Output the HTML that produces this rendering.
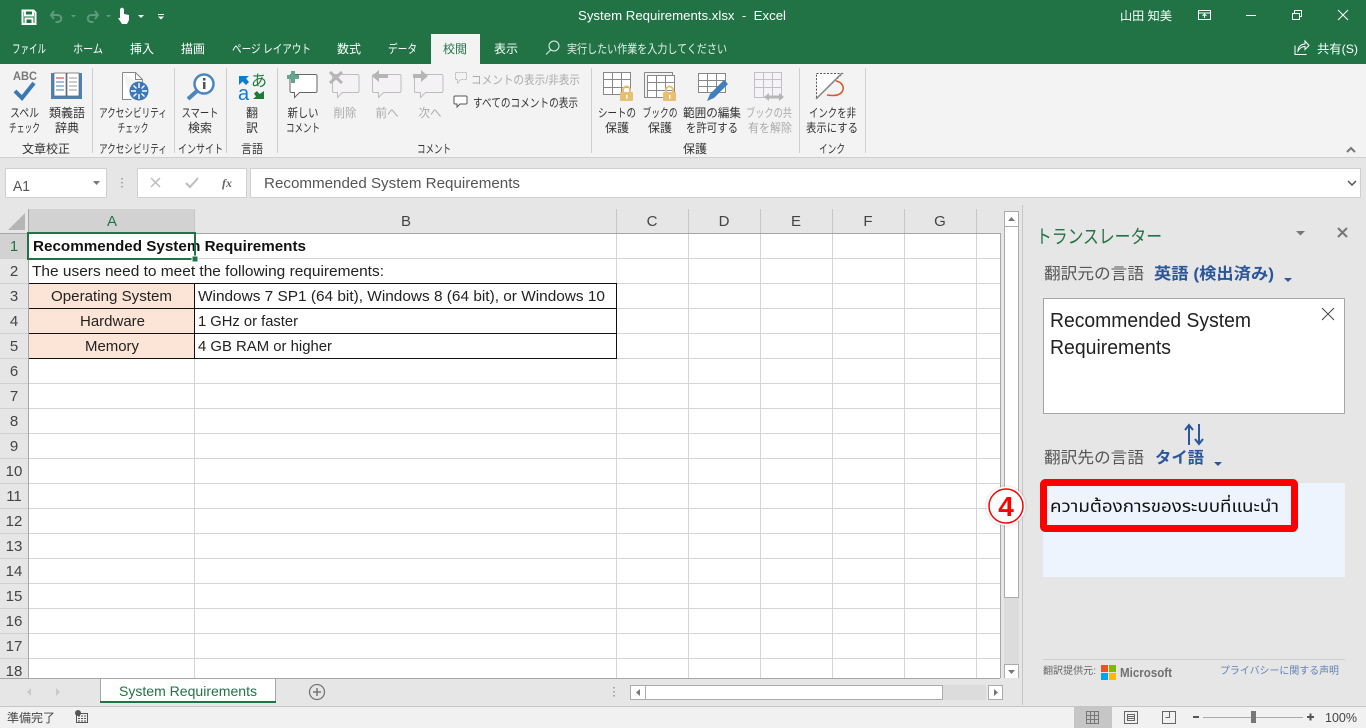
<!DOCTYPE html>
<html lang="ja"><head><meta charset="utf-8"><title>System Requirements.xlsx - Excel</title>
<style>
html,body{margin:0;padding:0;width:1366px;height:728px;overflow:hidden;background:#e6e6e6}
svg{display:block}
text{font-family:"Liberation Sans","Noto Sans CJK JP",sans-serif;white-space:pre}
.j{font-size:12px;fill:#333}
.m{text-anchor:middle}
.d{fill:#ababab}
.w{fill:#fff;font-size:12px}
.c{font-size:15px;fill:#222}
.h{font-size:15px;fill:#444;text-anchor:middle}
.g{stroke:#d4d4d4;stroke-width:1;fill:none}
.t{fill:none;stroke:#fff}
</style></head><body>
<svg width="1366" height="728" viewBox="0 0 1366 728" xmlns="http://www.w3.org/2000/svg" shape-rendering="geometricPrecision">
<!-- backgrounds -->
<rect width="1366" height="728" fill="#e6e6e6"/>
<rect width="1366" height="64" fill="#217346"/>
<rect x="431" y="34" width="49" height="30" fill="#f3f3f3"/>
<rect y="64" width="1366" height="93" fill="#f3f3f3"/>
<rect y="157" width="1366" height="1" fill="#cfcfcf"/>

<!-- QAT -->
<path d="M22.500 10.500h11l2 2v11.500h-13z M25 10.500v5h8v-5 M25.500 24v-5.500h7V24" fill="none" stroke="#fff" stroke-width="2"/>
<path d="M54 11l-3 4 3 4M51.500 15h6c5 0 5 7 0 7h-2" fill="none" stroke="#5f9a7c" stroke-width="2"/>
<path d="M71 15h5l-2.500 2.500z" fill="#5f9a7c"/>
<path d="M95 11l3 4-3 4M97.500 15h-6c-5 0-5 7 0 7h2" fill="none" stroke="#5f9a7c" stroke-width="2"/>
<path d="M106 15h5l-2.500 2.500z" fill="#5f9a7c"/>
<path d="M120 10c0-3 4-3 4 0v4l5 1v5l-2 4h-5l-4-6 2 0z" fill="#fff"/>
<path d="M138 15h6l-3 3z" fill="#fff"/>
<path d="M158 14h6v1h-6zM158 16.500h6l-3 3z" fill="#fff"/>

<!-- Title -->
<text x="578" y="20" style="fill:#fff;font-size:13px" textLength="208" lengthAdjust="spacingAndGlyphs">System Requirements.xlsx  -  Excel</text>
<text x="1120" y="20" class="w" textLength="52" lengthAdjust="spacingAndGlyphs">山田 知美</text>
<rect x="1198.500" y="10.500" width="12" height="9" class="t"/><path d="M1198.500 13h12M1204.500 18v-4M1202.500 16l2-2 2 2" class="t"/>
<path d="M1246 15.500h10" class="t"/>
<path d="M1292.500 13.500h7v6h-7zM1294.500 13v-2.500h7v6h-2" class="t"/>
<path d="M1338 10l10 10M1348 10l-10 10" class="t"/>

<!-- Tabs -->
<text x="12" y="53" class="w" textLength="34" lengthAdjust="spacingAndGlyphs">ファイル</text>
<text x="73" y="53" class="w" textLength="30" lengthAdjust="spacingAndGlyphs">ホーム</text>
<text x="130" y="53" class="w" textLength="24" lengthAdjust="spacingAndGlyphs">挿入</text>
<text x="181" y="53" class="w" textLength="24" lengthAdjust="spacingAndGlyphs">描画</text>
<text x="232" y="53" class="w" textLength="79" lengthAdjust="spacingAndGlyphs">ページ レイアウト</text>
<text x="337" y="53" class="w" textLength="24" lengthAdjust="spacingAndGlyphs">数式</text>
<text x="388" y="53" class="w" textLength="29" lengthAdjust="spacingAndGlyphs">データ</text>
<text x="443" y="53" style="font-size:12px;fill:#217346" textLength="24" lengthAdjust="spacingAndGlyphs">校閲</text>
<text x="494" y="53" class="w" textLength="24" lengthAdjust="spacingAndGlyphs">表示</text>
<circle cx="554" cy="46" r="5" fill="none" stroke="#fff" stroke-opacity=".9"/><path d="M550.500 50l-4.500 4.500" stroke="#fff" stroke-opacity=".9"/>
<text x="567" y="53" style="font-size:12px;fill:#e4f0e9" textLength="160" lengthAdjust="spacingAndGlyphs">実行したい作業を入力してください</text>
<path d="M1295 45.500v9h11.500M1298 51c0-5 4-7 7-7v-3l4 4.500-4 4v-3c-3 0-5 1-7 4.500z" class="t"/>
<text x="1317" y="53" class="w" textLength="41" lengthAdjust="spacingAndGlyphs">共有(S)</text>

<!-- Ribbon separators -->
<path d="M92.500 68v85M174.500 68v85M226.500 68v85M277.500 68v85M591.500 68v85M799.500 68v85M865.500 68v85" stroke="#cfcfcf" fill="none"/>
<path d="M1347 152l4-4 4 4" fill="none" stroke="#777" stroke-width="2"/>

<!-- Spell icon -->
<text x="13" y="80" style="font-size:12px;font-weight:bold;fill:#777" textLength="24" lengthAdjust="spacingAndGlyphs">ABC</text>
<path d="M15 91l7 7 12-15" fill="none" stroke="#3a78b4" stroke-width="4"/>
<!-- Thesaurus -->
<rect x="51" y="73" width="31" height="26" fill="#4d82b8"/>
<path d="M54 73h12v23H54zM67 73h12v23H67z" fill="#fff" stroke="#666" stroke-width=".7"/>
<path d="M56 78h8" stroke="#c0392b"/><path d="M56 82h8M56 86h8M56 90h8" stroke="#4d82b8"/><path d="M69 78h8M69 82h8M69 86h8M69 90h8" stroke="#999"/>
<!-- Accessibility -->
<path d="M122.500 72.500h13l7 7v6M142.500 79.500h-7v-7M122.500 72.500v27h9" fill="#fff" stroke="#888"/>
<circle cx="139" cy="91" r="9.500" fill="#3b78b5"/>
<path d="M139 83v5M139 94v5M131 91h5M142 91h5M133.500 85.500l3 3M141.500 93.500l3 3M144.500 85.500l-3 3M136.500 93.500l-3 3" stroke="#fff" stroke-width="1.400"/>
<!-- Smart lookup -->
<circle cx="204" cy="84" r="9.500" fill="#fff" stroke="#4d86bd" stroke-width="2.500"/>
<path d="M197 91l-9 8" stroke="#4d86bd" stroke-width="4"/>
<rect x="203" y="82" width="2.500" height="7" fill="#555"/><rect x="203" y="78" width="2.500" height="2.500" fill="#555"/>
<!-- Translate -->
<path d="M239 76h10l-3 2.500 3 3.500-3 3-3.500-3.500-3.500 3.500z" fill="#0f7ad1"/>
<text x="251" y="86" style="font-size:16px;fill:#1f7a3a">あ</text>
<text x="238" y="100" style="font-size:20px;fill:#0f7ad1">a</text>
<path d="M264 91v8h-11l3-2.500-2-3 3-2.500 2.500 3z" fill="#1f7a3a"/>
<!-- New comment -->
<path d="M290.500 74.500h25q1.500 0 1.500 1.500v15q0 1.500-1.500 1.500h-16l-5 5v-5h-3q-1.500 0-1.500-1.500V76q0-1.500 1.500-1.500z" fill="#fff" stroke="#666"/>
<path d="M287 75h4v-4h4v4h4v4h-4v4h-4v-4h-4z" fill="#63a58f"/>
<!-- Delete -->
<path d="M333.500 74.500h24q1.500 0 1.500 1.500v15q0 1.500-1.500 1.500h-15l-5 5v-5h-3.500q-1.500 0-1.500-1.500V76q0-1.500 1.500-1.500z" fill="#f5f2f6" stroke="#bdbdbd"/>
<path d="M330 72l12 11M342 72l-12 11" stroke="#b5b5b5" stroke-width="3"/>
<!-- Prev -->
<path d="M374.500 74.500h25q1.500 0 1.500 1.500v15q0 1.500-1.500 1.500h-16l-5 5v-5h-4.500q-1.500 0-1.500-1.500V76q0-1.500 1.500-1.500z" fill="#f5f2f6" stroke="#bdbdbd"/>
<path d="M372 76l7-6v4h9v4h-9v4z" fill="#b5b5b5"/>
<!-- Next -->
<path d="M416.500 74.500h25q1.500 0 1.500 1.500v15q0 1.500-1.500 1.500h-16l-5 5v-5h-4.500q-1.500 0-1.500-1.500V76q0-1.500 1.500-1.500z" fill="#f5f2f6" stroke="#bdbdbd"/>
<path d="M428 76l-7-6v4h-8v4h8v4z" fill="#b5b5b5"/>
<!-- show comment small -->
<path d="M455.500 72.500h11v7h-6l-3 4v-4h-2z" fill="none" stroke="#b5b5b5" stroke-dasharray="2 1"/>
<path d="M455 96h11q1 0 1 1v6q0 1-1 1h-6l-3 3v-3h-2q-1 0-1-1v-6q0-1 1-1z" fill="#fff" stroke="#555"/>
<!-- Protect icons -->
<g fill="none" stroke="#888"><path d="M603.500 72.500h27v22h-27zM603.500 79.500h27M603.500 87.500h27M612.500 72.500v22M621.500 72.500v22" fill="#fff"/></g>
<rect x="620" y="92" width="13" height="9" rx="1" fill="#e9bf73"/><path d="M623 92v-2a3.500 3.500 0 017 0v2" fill="none" stroke="#e9bf73" stroke-width="2"/><rect x="626" y="95" width="1.500" height="3.500" fill="#fff"/>
<g fill="none" stroke="#888"><path d="M644.500 72.500h28v3M644.500 72.500v25h3"/><path d="M647.500 75.500h27v22h-27zM647.500 82.500h27M647.500 90.500h27M656.500 75.500v22M665.500 75.500v22" fill="#fff"/></g>
<rect x="663" y="92" width="13" height="9" rx="1" fill="#e9bf73"/><path d="M666 92v-2a3.500 3.500 0 017 0v2" fill="none" stroke="#e9bf73" stroke-width="2"/><rect x="669" y="95" width="1.500" height="3.500" fill="#fff"/>
<path d="M698.500 73.500h27v19h-27zM698.500 80.500h27M698.500 86.500h27M707.500 73.500v19M716.500 73.500v19" fill="#fff" stroke="#888"/>
<path d="M707 101l3-7 14-14 4 4-14 14z" fill="#3f7fc0"/>
<g fill="none" stroke="#c3bfc6"><path d="M754.500 72.500h27v25h-27zM754.500 79.500h27M754.500 87.500h27M763.500 72.500v25M772.500 72.500v25" fill="#f6f3f8"/></g>
<path d="M764 97l5-4v2.500h10V93l5 4-5 4v-2.500h-10v2.500z" fill="#b5b5b5"/>
<!-- Ink -->
<path d="M816.500 73.500h26l-26 25z" fill="#fff" stroke="#555" stroke-dasharray="2 1.500"/>
<path d="M842 73l-26 26" stroke="#888" stroke-width="1.500"/>
<path d="M836 81c6 1 9 6 6 11-3 4-9 4-15 3" fill="none" stroke="#d9532c" stroke-width="1.500"/>

<!-- Ribbon labels -->
<text x="24.500" y="117" class="j m" textLength="29" lengthAdjust="spacingAndGlyphs">スペル</text><text x="24.500" y="132" class="j m" textLength="31" lengthAdjust="spacingAndGlyphs">チェック</text>
<text x="67" y="117" class="j m" textLength="36" lengthAdjust="spacingAndGlyphs">類義語</text><text x="67" y="132" class="j m" textLength="24" lengthAdjust="spacingAndGlyphs">辞典</text>
<text x="133" y="117" class="j m" textLength="68" lengthAdjust="spacingAndGlyphs">アクセシビリティ</text><text x="133" y="132" class="j m" textLength="31" lengthAdjust="spacingAndGlyphs">チェック</text>
<text x="200" y="117" class="j m" textLength="37" lengthAdjust="spacingAndGlyphs">スマート</text><text x="200" y="132" class="j m" textLength="24" lengthAdjust="spacingAndGlyphs">検索</text>
<text x="252" y="117" class="j m">翻</text><text x="252" y="132" class="j m">訳</text>
<text x="303" y="117" class="j m" textLength="31" lengthAdjust="spacingAndGlyphs">新しい</text><text x="303" y="132" class="j m" textLength="34" lengthAdjust="spacingAndGlyphs">コメント</text>
<text x="345" y="117" class="j m d" textLength="23" lengthAdjust="spacingAndGlyphs">削除</text><text x="387" y="117" class="j m d" textLength="23" lengthAdjust="spacingAndGlyphs">前へ</text><text x="430" y="117" class="j m d" textLength="23" lengthAdjust="spacingAndGlyphs">次へ</text>
<text x="471" y="84" class="j d" textLength="109" lengthAdjust="spacingAndGlyphs">コメントの表示/非表示</text>
<text x="473" y="107" class="j" textLength="105" lengthAdjust="spacingAndGlyphs">すべてのコメントの表示</text>
<text x="617" y="117" class="j m" textLength="38" lengthAdjust="spacingAndGlyphs">シートの</text><text x="617" y="132" class="j m" textLength="24" lengthAdjust="spacingAndGlyphs">保護</text>
<text x="660" y="117" class="j m" textLength="35" lengthAdjust="spacingAndGlyphs">ブックの</text><text x="660" y="132" class="j m" textLength="24" lengthAdjust="spacingAndGlyphs">保護</text>
<text x="712" y="117" class="j m" textLength="58" lengthAdjust="spacingAndGlyphs">範囲の編集</text><text x="712" y="132" class="j m" textLength="52" lengthAdjust="spacingAndGlyphs">を許可する</text>
<text x="769" y="117" class="j m d" textLength="46" lengthAdjust="spacingAndGlyphs">ブックの共</text><text x="770" y="132" class="j m d" textLength="44" lengthAdjust="spacingAndGlyphs">有を解除</text>
<text x="832.500" y="117" class="j m" textLength="47" lengthAdjust="spacingAndGlyphs">インクを非</text><text x="832" y="132" class="j m" textLength="52" lengthAdjust="spacingAndGlyphs">表示にする</text>
<text x="46" y="153" class="j m" textLength="48" lengthAdjust="spacingAndGlyphs">文章校正</text>
<text x="133" y="153" class="j m" textLength="68" lengthAdjust="spacingAndGlyphs">アクセシビリティ</text>
<text x="200.500" y="153" class="j m" textLength="45" lengthAdjust="spacingAndGlyphs">インサイト</text>
<text x="252" y="153" class="j m" textLength="22" lengthAdjust="spacingAndGlyphs">言語</text>
<text x="434" y="153" class="j m" textLength="34" lengthAdjust="spacingAndGlyphs">コメント</text>
<text x="695" y="153" class="j m" textLength="24" lengthAdjust="spacingAndGlyphs">保護</text>
<text x="832" y="153" class="j m" textLength="26" lengthAdjust="spacingAndGlyphs">インク</text>

<!-- Formula bar -->
<rect x="5.500" y="168.500" width="101" height="29" fill="#fff" stroke="#d0d0d0"/>
<text x="13" y="191" style="font-size:15px;fill:#555" textLength="17" lengthAdjust="spacingAndGlyphs">A1</text>
<path d="M93 181h7l-3.500 4z" fill="#777"/>
<path d="M122 178v1.500M122 182v1.500M122 186v1.500" stroke="#aaa" stroke-width="2"/>
<rect x="137.500" y="168.500" width="109" height="29" fill="#fff" stroke="#d0d0d0"/>
<path d="M151 178l9 9M160 178l-9 9" stroke="#bdbdbd" stroke-width="1.500"/>
<path d="M186 183l4 4 8-9" stroke="#bdbdbd" stroke-width="2" fill="none"/>
<text x="222" y="187" style="font-size:12px;font-style:italic;font-weight:bold;font-family:'Liberation Serif',serif;fill:#666">fx</text>
<rect x="250.500" y="168.500" width="1110" height="29" fill="#fff" stroke="#d0d0d0"/>
<text x="264" y="188" style="font-size:15px;fill:#555" textLength="256" lengthAdjust="spacingAndGlyphs">Recommended System Requirements</text>
<path d="M1348 181l4 4 4-4" fill="none" stroke="#555" stroke-width="1.500"/>

<!-- Sheet -->
<rect x="29" y="234" width="971" height="444" fill="#fff"/>
<rect x="29" y="209" width="166" height="24" fill="#d2d2d2"/>
<rect x="0" y="233" width="28" height="26" fill="#d2d2d2"/>
<path d="M8 230h17v-17z" fill="#b5b5b5"/>
<path d="M28.500 209v469M0 233.500h1000M1000.500 233v445" stroke="#a6a6a6" fill="none"/>
<path d="M194.500 209v24M616.500 209v24M688.500 209v24M760.500 209v24M832.500 209v24M904.500 209v24M976.500 209v24" stroke="#c6c6c6" fill="none"/>
<path class="g" d="M29 258.500h971M29 283.500h971M29 308.500h971M29 333.500h971M29 358.500h971M29 383.500h971M29 408.500h971M29 433.500h971M29 458.500h971M29 483.500h971M29 508.500h971M29 533.500h971M29 558.500h971M29 583.500h971M29 608.500h971M29 633.500h971M29 658.500h971"/>
<path class="g" d="M194.500 358v320M616.500 234v444M688.500 234v444M760.500 234v444M832.500 234v444M904.500 234v444M976.500 234v444"/>
<path d="M0 258.500h28M0 283.500h28M0 308.500h28M0 333.500h28M0 358.500h28M0 383.500h28M0 408.500h28M0 433.500h28M0 458.500h28M0 483.500h28M0 508.500h28M0 533.500h28M0 558.500h28M0 583.500h28M0 608.500h28M0 633.500h28M0 658.500h28" stroke="#d0d0d0" fill="none"/>
<rect x="29" y="284" width="165" height="74" fill="#fce4d6"/>
<path d="M29 283.500h588M29 308.500h588M29 333.500h588M29 358.500h588M194.500 283v76M616.500 283v76" stroke="#111" fill="none"/>

<text x="112" y="226" class="h" style="fill:#217346">A</text><text x="406" y="226" class="h">B</text><text x="652" y="226" class="h">C</text><text x="724" y="226" class="h">D</text><text x="796" y="226" class="h">E</text><text x="868" y="226" class="h">F</text><text x="940" y="226" class="h">G</text>
<text x="14" y="251" class="h" style="fill:#217346">1</text><text x="14" y="276" class="h">2</text><text x="14" y="301" class="h">3</text><text x="14" y="326" class="h">4</text><text x="14" y="351" class="h">5</text><text x="14" y="376" class="h">6</text><text x="14" y="401" class="h">7</text><text x="14" y="426" class="h">8</text><text x="14" y="451" class="h">9</text><text x="14" y="476" class="h">10</text><text x="14" y="501" class="h">11</text><text x="14" y="526" class="h">12</text><text x="14" y="551" class="h">13</text><text x="14" y="576" class="h">14</text><text x="14" y="601" class="h">15</text><text x="14" y="626" class="h">16</text><text x="14" y="651" class="h">17</text><text x="14" y="676" class="h">18</text>

<text x="33" y="251" class="c" style="font-weight:bold;fill:#111" textLength="273" lengthAdjust="spacingAndGlyphs">Recommended System Requirements</text>
<text x="32" y="276" class="c" textLength="352" lengthAdjust="spacingAndGlyphs">The users need to meet the following requirements:</text>
<text x="51" y="301" class="c" textLength="121" lengthAdjust="spacingAndGlyphs">Operating System</text>
<text x="80" y="326" class="c" textLength="65" lengthAdjust="spacingAndGlyphs">Hardware</text>
<text x="85" y="351" class="c" textLength="54" lengthAdjust="spacingAndGlyphs">Memory</text>
<text x="198" y="301" class="c" textLength="407" lengthAdjust="spacingAndGlyphs">Windows 7 SP1 (64 bit), Windows 8 (64 bit), or Windows 10</text>
<text x="198" y="326" class="c" textLength="100" lengthAdjust="spacingAndGlyphs">1 GHz or faster</text>
<text x="198" y="351" class="c" textLength="134" lengthAdjust="spacingAndGlyphs">4 GB RAM or higher</text>

<rect x="28" y="233" width="167" height="26" fill="none" stroke="#217346" stroke-width="2"/>
<rect x="192" y="256" width="6" height="6" fill="#217346" stroke="#fff" stroke-width="1"/>

<!-- V scrollbar -->
<rect x="1004" y="211" width="15" height="469" fill="#dcdcdc"/>
<rect x="1004.500" y="211.500" width="14" height="15" fill="#fff" stroke="#ababab"/>
<path d="M1008 221l3.500-4 3.500 4z" fill="#777"/>
<rect x="1004.500" y="226.500" width="14" height="371" fill="#fff" stroke="#ababab"/>
<rect x="1004.500" y="664.500" width="14" height="15" fill="#fff" stroke="#ababab"/>
<path d="M1008 670h7l-3.500 4z" fill="#777"/>
<path d="M1022.500 205v500" stroke="#c6c6c6"/>

<!-- Sheet tabs / H scroll -->
<rect x="0" y="678" width="1022" height="28" fill="#e6e6e6"/>
<path d="M0 678.500h1000" stroke="#a6a6a6"/>
<path d="M100.500 678v25M275.500 678v25" stroke="#a6a6a6"/>
<rect x="101" y="679" width="174" height="23" fill="#fff"/>
<rect x="100" y="701" width="176" height="2" fill="#217346"/>
<text x="119" y="696" style="font-size:14px;fill:#217346" textLength="138" lengthAdjust="spacingAndGlyphs">System Requirements</text>
<path d="M31 688l-4 4 4 4zM56 688l4 4-4 4z" fill="#c9c9c9"/>
<circle cx="317" cy="692" r="7.500" fill="none" stroke="#777" stroke-width="1.300"/>
<path d="M313 692h8M317 688v8" stroke="#777" stroke-width="1.500"/>
<path d="M614 687v1.500M614 691v1.500M614 695v1.500" stroke="#aaa" stroke-width="2"/>
<rect x="943" y="685" width="43" height="15" fill="#dcdcdc"/>
<rect x="630.500" y="685.500" width="15" height="14" fill="#fff" stroke="#ababab"/>
<path d="M640 689l-4 3.500 4 3.500z" fill="#777"/>
<rect x="645.500" y="685.500" width="297" height="14" fill="#fff" stroke="#ababab"/>
<rect x="988.500" y="685.500" width="14" height="14" fill="#fff" stroke="#ababab"/>
<path d="M994 689l4 3.500-4 3.500z" fill="#777"/>

<!-- Pane -->
<text x="1036" y="243" style="font-size:19px;fill:#217346" textLength="126" lengthAdjust="spacingAndGlyphs">トランスレーター</text>
<path d="M1296 231h9l-4.500 4.500z" fill="#777"/>
<path d="M1338 228l9 9M1347 228l-9 9" stroke="#777" stroke-width="2"/>
<text x="1044" y="279" style="font-size:16px;fill:#555" textLength="100" lengthAdjust="spacingAndGlyphs">翻訳元の言語</text>
<text x="1154" y="279" style="font-size:16px;font-weight:bold;fill:#2b579a" textLength="120" lengthAdjust="spacingAndGlyphs">英語 (検出済み)</text>
<path d="M1284 278h8l-4 4z" fill="#2b579a"/>
<rect x="1043.500" y="298.500" width="301" height="115" fill="#fff" stroke="#a6a6a6"/>
<text x="1050" y="327" style="font-size:20px;fill:#222" textLength="201" lengthAdjust="spacingAndGlyphs">Recommended System</text>
<text x="1050" y="354" style="font-size:20px;fill:#222" textLength="121" lengthAdjust="spacingAndGlyphs">Requirements</text>
<path d="M1322 308l12 12M1334 308l-12 12" stroke="#444"/>
<path d="M1189 445v-20M1185 430l4-5 4 5M1199 424v20M1195 439l4 5 4-5" fill="none" stroke="#2b579a" stroke-width="2"/>
<text x="1044" y="463" style="font-size:16px;fill:#555" textLength="100" lengthAdjust="spacingAndGlyphs">翻訳先の言語</text>
<text x="1155" y="463" style="font-size:16px;font-weight:bold;fill:#2b579a" textLength="49" lengthAdjust="spacingAndGlyphs">タイ語</text>
<path d="M1214 462h8l-4 4z" fill="#2b579a"/>
<rect x="1043" y="483" width="302" height="94" fill="#edf4fe"/>
<text x="1050" y="512" style="font-size:17px;fill:#111;font-family:'Liberation Sans','Noto Sans Thai','Loma','Garuda','DejaVu Sans',sans-serif" textLength="229" lengthAdjust="spacingAndGlyphs">ความต้องการของระบบที่แนะนำ</text>
<rect x="1043.500" y="482.500" width="251" height="46" rx="2" fill="none" stroke="#fe0000" stroke-width="7"/>
<circle cx="1006" cy="506" r="21" fill="#000" opacity=".06"/>
<circle cx="1006" cy="506" r="19.500" fill="#fff"/>
<circle cx="1006" cy="506" r="17" fill="#fff" stroke="#fe0000" stroke-width="1.500"/>
<text x="1006" y="516" class="m" style="font-size:28px;font-weight:bold;fill:#fe0000">4</text>

<path d="M1043 659.500h302" stroke="#cfcfcf"/>
<text x="1043" y="674" style="font-size:10px;fill:#666" textLength="53" lengthAdjust="spacingAndGlyphs">翻訳提供元:</text>
<rect x="1101" y="665" width="7" height="7" fill="#f25022"/><rect x="1109" y="665" width="7" height="7" fill="#7fba00"/><rect x="1101" y="673" width="7" height="7" fill="#00a4ef"/><rect x="1109" y="673" width="7" height="7" fill="#ffb900"/>
<text x="1120" y="677" style="font-size:13px;font-weight:bold;fill:#707070" textLength="52" lengthAdjust="spacingAndGlyphs">Microsoft</text>
<text x="1220" y="674" style="font-size:10px;fill:#5f82b4" textLength="119" lengthAdjust="spacingAndGlyphs">プライバシーに関する声明</text>

<!-- Status bar -->
<rect y="706" width="1366" height="22" fill="#f1f1f1"/>
<path d="M0 706.500h1366" stroke="#c6c6c6"/>
<text x="7" y="722" style="font-size:12px;fill:#444" textLength="48" lengthAdjust="spacingAndGlyphs">準備完了</text>
<circle cx="78" cy="713" r="3" fill="#555"/>
<rect x="76.500" y="713.500" width="11" height="9" fill="none" stroke="#555"/><path d="M78 716h8M78 718.500h8M78 721h8" stroke="#555" stroke-dasharray="2 1"/>
<rect x="1074" y="707" width="38" height="21" fill="#c6c6c6"/>
<path d="M1086.500 711.500h12v12h-12zM1086.500 715.500h12M1086.500 719.500h12M1090.500 711.500v12M1094.500 711.500v12" fill="none" stroke="#777"/>
<path d="M1124.500 711.500h13v12h-13zM1127.500 714.500h7v6h-7zM1128 716.500h6M1128 718.500h6" fill="none" stroke="#666"/>
<path d="M1162.500 711.500h13v12h-13zM1169.500 711.500v6h-4" fill="none" stroke="#666"/>
<path d="M1193 717h6" stroke="#555" stroke-width="2"/>
<path d="M1203 717.500h100" stroke="#aaa"/>
<rect x="1251" y="711" width="5" height="12" fill="#777"/>
<path d="M1307 717h7M1310.500 713.500v7" stroke="#555" stroke-width="2"/>
<text x="1325" y="722" style="font-size:13px;fill:#444" textLength="32" lengthAdjust="spacingAndGlyphs">100%</text>
</svg>
</body></html>
